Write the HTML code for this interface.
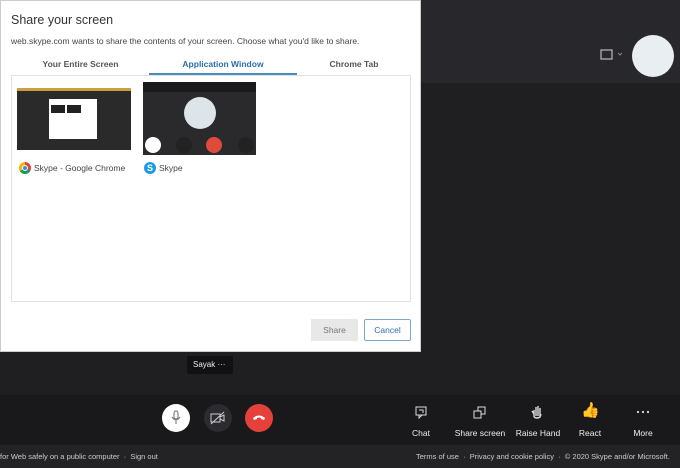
<!DOCTYPE html><html><head><style>
*{margin:0;padding:0;box-sizing:border-box}
body{width:680px;height:468px;overflow:hidden;background:#1f1f22;font-family:"Liberation Sans",sans-serif;position:relative}
.a{position:absolute}
</style></head><body>
<div class="a" style="left:0;top:0;width:680px;height:83px;background:#28282c"></div>
<div class="a" style="left:0;top:395px;width:680px;height:50px;background:#19191b"></div>
<div class="a" style="left:0;top:445px;width:680px;height:23px;background:#232326"></div>
<svg class="a" style="left:599px;top:48px" width="26" height="14"><rect x="2" y="2" width="11" height="9" fill="none" stroke="#bbb" stroke-width="1.2"/><path d="M19 5l2 2 2-2" stroke="#888" fill="none"/></svg>
<div class="a" style="left:632px;top:35px;width:42px;height:42px;border-radius:50%;background:#e8eef2"></div>
<div class="a" style="left:0;top:0;width:421px;height:352px;background:#fff;border:1px solid #ccc">
<div class="a" style="left:10px;top:12px;font-size:12.5px;color:#333">Share your screen</div>
<div class="a" style="left:10px;top:35px;font-size:8.5px;color:#444">web.skype.com wants to share the contents of your screen. Choose what you'd like to share.</div>
<div class="a" style="left:10px;top:58px;width:139px;text-align:center;font-size:8.5px;font-weight:bold;color:#555">Your Entire Screen</div>
<div class="a" style="left:148px;top:58px;width:148px;text-align:center;font-size:8.5px;font-weight:bold;color:#2a6fa8">Application Window</div>
<div class="a" style="left:148px;top:72px;width:148px;height:2px;background:#4a8ab8"></div>
<div class="a" style="left:296px;top:58px;width:114px;text-align:center;font-size:8.5px;font-weight:bold;color:#555">Chrome Tab</div>
<div class="a" style="left:10px;top:74px;width:400px;height:227px;border:1px solid #e2e2e2"></div>
<div class="a" style="left:16px;top:87px;width:114px;height:62px;background:#2a2a2a;border-top:3px solid #c9a040">
 <div class="a" style="left:32px;top:8px;width:48px;height:40px;background:#fff"></div>
 <div class="a" style="left:34px;top:14px;width:14px;height:8px;background:#222"></div>
 <div class="a" style="left:50px;top:14px;width:14px;height:8px;background:#222"></div>
</div>
<div class="a" style="left:142px;top:81px;width:113px;height:73px;background:#2a2a2d">
 <div class="a" style="left:0;top:0;width:113px;height:10px;background:#1a1a1c"></div>
 <div class="a" style="left:41px;top:15px;width:32px;height:32px;border-radius:50%;background:#dde4ea"></div>
 <div class="a" style="left:2px;top:55px;width:16px;height:16px;border-radius:50%;background:#fff"></div>
 <div class="a" style="left:33px;top:55px;width:16px;height:16px;border-radius:50%;background:#222"></div>
 <div class="a" style="left:63px;top:55px;width:16px;height:16px;border-radius:50%;background:#e04a3c"></div>
 <div class="a" style="left:95px;top:55px;width:16px;height:16px;border-radius:50%;background:#222"></div>
</div>
<div class="a" style="left:18px;top:161px;width:12px;height:12px;border-radius:50%;background:conic-gradient(#db4437 0 33%,#0f9d58 0 66%,#f4b400 0);"></div>
<div class="a" style="left:21px;top:164px;width:6px;height:6px;border-radius:50%;background:#4285f4;border:1px solid #fff"></div>
<div class="a" style="left:33px;top:162px;font-size:8.5px;color:#444">Skype - Google Chrome</div>
<div class="a" style="left:143px;top:161px;width:12px;height:12px;border-radius:50%;background:#1a9ae0;color:#fff;font-size:9px;font-weight:bold;text-align:center;line-height:12px">S</div>
<div class="a" style="left:158px;top:162px;font-size:8.5px;color:#444">Skype</div>
<div class="a" style="left:310px;top:318px;width:47px;height:22px;background:#e8e8e8;color:#777;font-size:8.5px;text-align:center;line-height:22px">Share</div>
<div class="a" style="left:363px;top:318px;width:47px;height:22px;border:1px solid #7fa8c8;border-radius:2px;color:#2a6fa8;font-size:8.5px;text-align:center;line-height:20px">Cancel</div>
</div>
<div class="a" style="left:187px;top:356px;width:46px;height:18px;background:#111;border-radius:2px;color:#eee;font-size:8px;line-height:18px;padding-left:6px">Sayak ···</div>
<div class="a" style="left:162px;top:404px;width:28px;height:28px;border-radius:50%;background:#fff"></div>
<svg class="a" style="left:170px;top:410px" width="12" height="16"><rect x="4" y="1" width="4" height="8" rx="2" fill="none" stroke="#666"/><path d="M2 7q4 6 8 0M6 11v3" stroke="#666" fill="none"/></svg>
<div class="a" style="left:204px;top:404px;width:28px;height:28px;border-radius:50%;background:#2c2c30"></div>
<svg class="a" style="left:210px;top:411px" width="16" height="14"><rect x="1" y="3" width="9" height="8" fill="none" stroke="#ccc"/><path d="M10 6l4-2v6l-4-2M1 13L14 1" stroke="#ccc" fill="none"/></svg>
<div class="a" style="left:245px;top:404px;width:28px;height:28px;border-radius:50%;background:#e5413a"></div>
<svg class="a" style="left:252px;top:413px" width="14" height="8"><path d="M1 5q6-5 12 0l-1 2-3-1v-1q-2-1-4 0v1l-3 1z" fill="#fff"/></svg>
<svg class="a" style="left:415px;top:406px" width="12" height="13"><rect x="1" y="1" width="10" height="8" fill="none" stroke="#ddd"/><path d="M4 9v3l3-3M4 4h4v3" stroke="#ddd" fill="none"/></svg>
<svg class="a" style="left:473px;top:406px" width="14" height="13"><rect x="1" y="5" width="7" height="7" fill="none" stroke="#ddd"/><path d="M5 5V1h7v7H8" stroke="#ddd" fill="none"/></svg>
<svg class="a" style="left:531px;top:405px" width="12" height="14"><path d="M3 12V5M5 11V2M7 11V1M9 11V3M3 9l-2-3M3 12q3 2 6 0l1-3" stroke="#ddd" fill="none" stroke-width="1.4"/></svg>
<div class="a" style="left:581px;top:401px;font-size:15px;color:#f2c040">👍</div>
<svg class="a" style="left:636px;top:410px" width="14" height="4"><circle cx="2" cy="2" r="1.1" fill="#ddd"/><circle cx="7" cy="2" r="1.1" fill="#ddd"/><circle cx="12" cy="2" r="1.1" fill="#ddd"/></svg>
<div class="a" style="left:395px;top:428px;width:52px;text-align:center;font-size:8.5px;color:#eee">Chat</div>
<div class="a" style="left:450px;top:428px;width:60px;text-align:center;font-size:8.5px;color:#eee">Share screen</div>
<div class="a" style="left:510px;top:428px;width:56px;text-align:center;font-size:8.5px;color:#eee">Raise Hand</div>
<div class="a" style="left:570px;top:428px;width:40px;text-align:center;font-size:8.5px;color:#eee">React</div>
<div class="a" style="left:623px;top:428px;width:40px;text-align:center;font-size:8.5px;color:#eee">More</div>
<div class="a" style="left:0;top:452px;font-size:7.5px;color:#ccc">for Web safely on a public computer &nbsp;·&nbsp; Sign out</div>
<div class="a" style="left:416px;top:452px;font-size:7.5px;color:#ccc;white-space:nowrap">Terms of use &nbsp;·&nbsp; Privacy and cookie policy &nbsp;·&nbsp; © 2020 Skype and/or Microsoft.</div>
</body></html>
